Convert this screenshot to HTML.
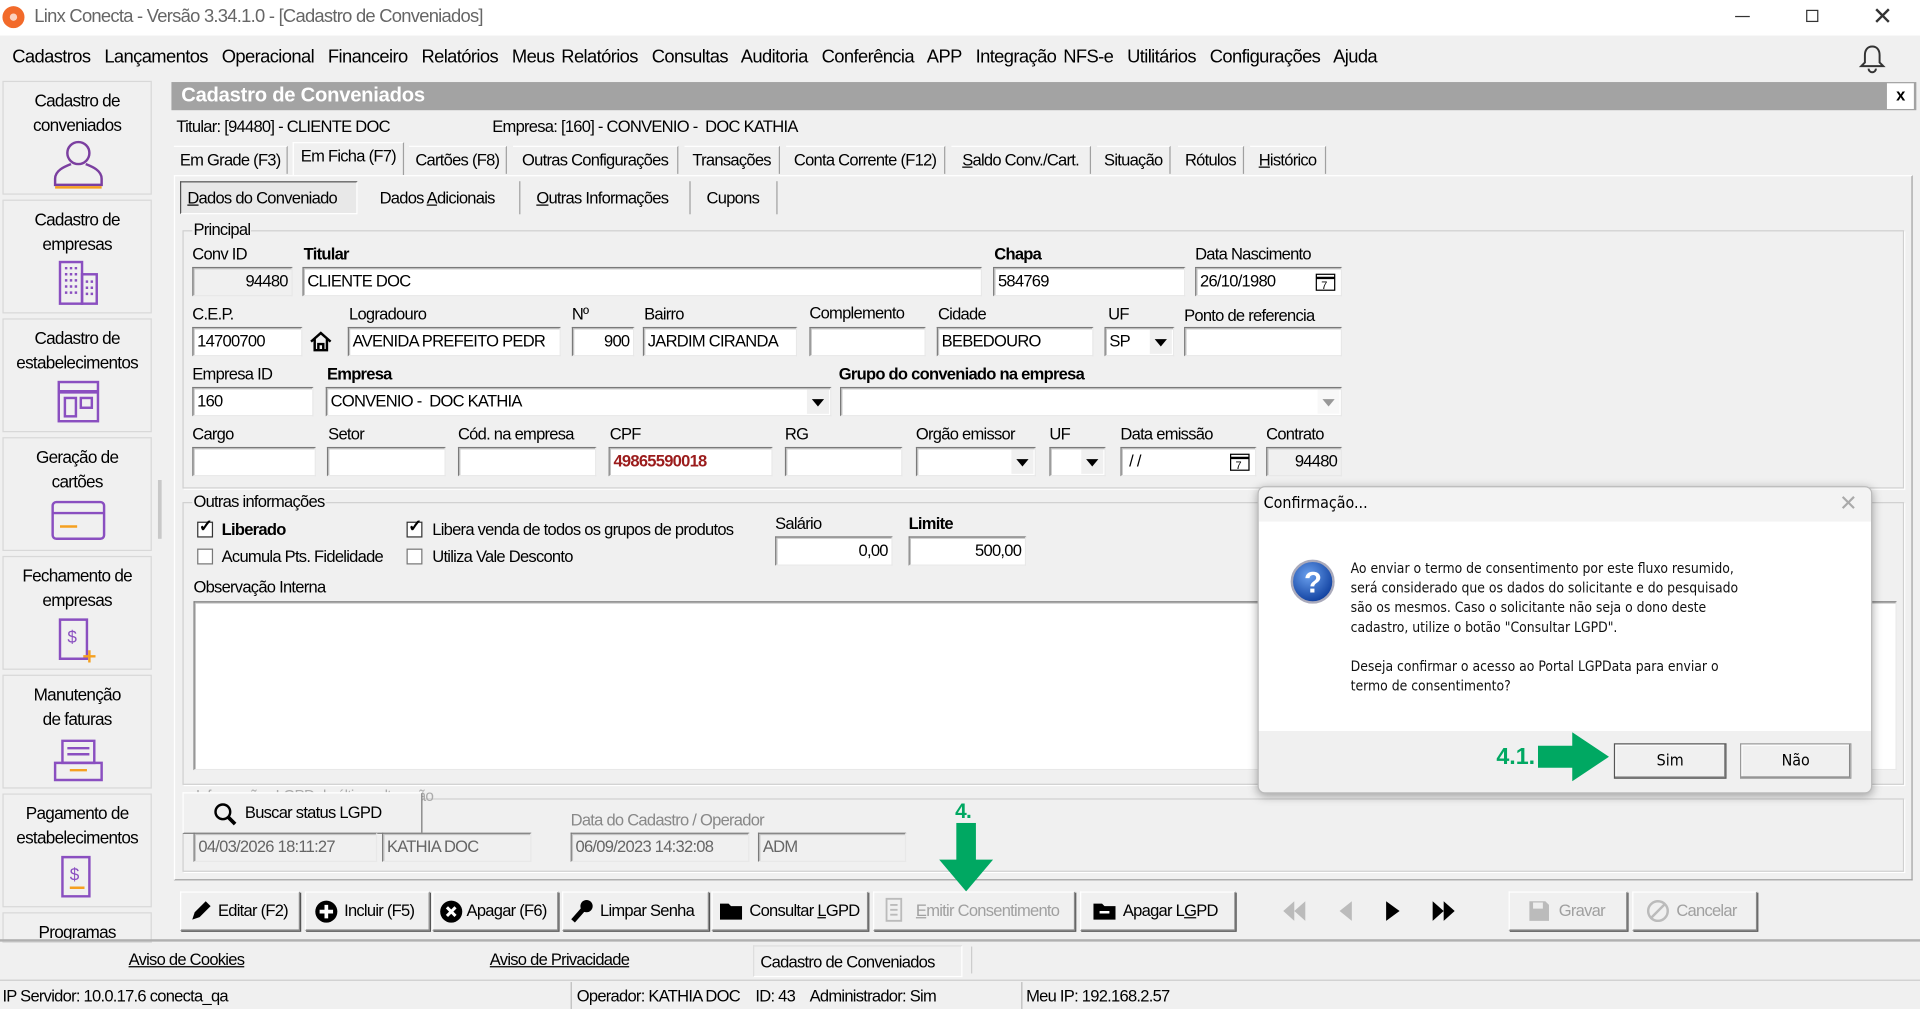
<!DOCTYPE html>
<html><head><meta charset="utf-8">
<style>
*{box-sizing:border-box;margin:0;padding:0}
html,body{width:1920px;height:1009px;overflow:hidden;background:#f0f0f0}
#st{position:absolute;left:0;top:0;width:1568px;height:824px;transform:scale(1.22449);transform-origin:0 0;background:#f0f0f0;font-family:"Liberation Sans",sans-serif;font-size:13.5px;letter-spacing:-0.6px;color:#000}
.a{position:absolute;white-space:nowrap}
.in{position:absolute;background:#fff;border:1px solid;border-color:#7a7a7a #e8e8e8 #e8e8e8 #7a7a7a;box-shadow:inset 1px 1px 0 #c4c4c4;height:24px;line-height:22px;padding-left:3px;white-space:nowrap;overflow:hidden}
.g{background:#f0f0f0}
.r{text-align:right;padding-right:3px}
.b{font-weight:bold}
.grp{position:absolute;border:1px solid #d0d0d0;box-shadow:1px 1px 0 #fff}
.lg{position:absolute;background:#f0f0f0;padding:0 1px;top:-9px;left:6px;line-height:16px}
.tab{position:absolute;top:119px;height:23px;line-height:22px;text-align:center;border-right:1px solid #a0a0a0;border-top:1px solid #fff;white-space:nowrap;overflow:hidden}
.sb{position:absolute;left:2px;width:122px;height:93px;border:1px solid #d8d8d8;background:#f0f0f0;text-align:center;line-height:20px;padding-top:5px;font-size:14px}
.btn{position:absolute;top:728px;height:32px;border:1px solid;border-color:#fff #8a8a8a #8a8a8a #fff;box-shadow:1px 1px 0 #555;line-height:30px;padding-left:8px;background:#f0f0f0;white-space:nowrap;overflow:hidden}
.dd{position:absolute;right:1px;top:1px;width:18px;height:20px;background:#f0f0f0}
.dd:after{content:"";position:absolute;left:4px;top:8px;border-left:5px solid transparent;border-right:5px solid transparent;border-top:6px solid #000}
.cb{position:absolute;width:13px;height:13px;border:1px solid #333;background:#fff}
u{text-decoration:underline}
.dlg{font-family:'DejaVu Sans Condensed','DejaVu Sans',sans-serif;letter-spacing:0}
</style></head><body>
<div id="st">
<div class="a" style="left:0;top:0;width:1568px;height:29px;background:#fff"></div>
<div class="a" style="left:2px;top:5px;width:18px;height:18px;border-radius:50%;background:#f26a2a"></div>
<div class="a" style="left:8px;top:11px;width:6px;height:6px;border-radius:50%;background:#fff;opacity:.7"></div>
<div class="a" style="left:28px;top:5px;color:#666;font-size:15px">Linx Conecta - Versão 3.34.1.0 - [Cadastro de Conveniados]</div>
<div class="a" style="left:1417px;top:13px;width:12px;border-top:1px solid #333"></div>
<div class="a" style="left:1475px;top:8px;width:10px;height:10px;border:1px solid #333"></div>
<div class="a" style="left:1529px;top:1px;font-size:20px;color:#333">✕</div>
<div class="a" style="left:10px;top:38px;font-size:15px;word-spacing:2px;letter-spacing:-0.5px">Cadastros&nbsp; Lançamentos&nbsp; Operacional&nbsp; Financeiro&nbsp; Relatórios&nbsp; Meus Relatórios&nbsp; Consultas&nbsp; Auditoria&nbsp; Conferência&nbsp; APP&nbsp; Integração NFS-e&nbsp; Utilitários&nbsp; Configurações&nbsp; Ajuda</div>
<svg class="a" style="left:1518px;top:36px" width="22" height="24" viewBox="0 0 22 24"><path d="M11 2c-4 0-6 3-6 7v6l-3 3h18l-3-3V9c0-4-2-7-6-7zM8 20a3 3 0 0 0 6 0" fill="none" stroke="#333" stroke-width="1.6"/></svg>
<div class="sb" style="top:66px">Cadastro de<br>conveniados
<svg style="position:absolute;left:38px;top:44px" width="46" height="44"><circle cx="23" cy="14" r="9" fill="none" stroke="#7b3fa0" stroke-width="2"/><path d="M17 23c-5 2-13 5-13 12v5h38v-5c0-7-8-10-13-12" fill="none" stroke="#7b3fa0" stroke-width="2"/><path d="M4 42h38" stroke="#f5a020" stroke-width="2"/></svg></div>
<div class="sb" style="top:163px">Cadastro de<br>empresas
<svg style="position:absolute;left:42px;top:46px" width="38" height="40"><rect x="4" y="4" width="18" height="34" fill="none" stroke="#8a4fc0" stroke-width="2"/><rect x="22" y="14" width="12" height="24" fill="none" stroke="#8a4fc0" stroke-width="2"/><path d="M8 9h10M8 14h10M8 19h10M8 24h10M8 29h10M25 20h6M25 25h6M25 30h6" stroke="#8a4fc0" stroke-width="2" stroke-dasharray="2 2"/></svg></div>
<div class="sb" style="top:260px">Cadastro de<br>estabelecimentos
<svg style="position:absolute;left:42px;top:48px" width="38" height="38"><rect x="3" y="3" width="32" height="32" fill="none" stroke="#8a4fc0" stroke-width="2"/><path d="M3 11h32" stroke="#8a4fc0" stroke-width="3"/><rect x="8" y="16" width="9" height="15" fill="none" stroke="#8a4fc0" stroke-width="2"/><rect x="21" y="16" width="9" height="8" fill="none" stroke="#8a4fc0" stroke-width="2"/></svg></div>
<div class="sb" style="top:357px">Geração de<br>cartões
<svg style="position:absolute;left:38px;top:50px" width="46" height="34"><rect x="2" y="2" width="42" height="30" rx="3" fill="none" stroke="#8a4fc0" stroke-width="2"/><path d="M2 11h42" stroke="#8a4fc0" stroke-width="2"/><path d="M8 22h14" stroke="#f5a020" stroke-width="2"/></svg></div>
<div class="sb" style="top:454px">Fechamento de<br>empresas
<svg style="position:absolute;left:42px;top:48px" width="36" height="40"><path d="M4 3h22v32H4z" fill="none" stroke="#8a4fc0" stroke-width="2"/><text x="10" y="22" font-size="14" fill="#8a4fc0" font-family="Liberation Sans">$</text><path d="M28 28v10M23 33h10" stroke="#f5a020" stroke-width="2"/></svg></div>
<div class="sb" style="top:551px">Manutenção<br>de faturas
<svg style="position:absolute;left:40px;top:50px" width="42" height="38"><path d="M8 3h26v18H8z" fill="none" stroke="#8a4fc0" stroke-width="2"/><path d="M12 9h18M12 14h18" stroke="#8a4fc0" stroke-width="2"/><path d="M2 21h38v14H2z" fill="none" stroke="#8a4fc0" stroke-width="2"/><path d="M14 27h14" stroke="#f5a020" stroke-width="2"/></svg></div>
<div class="sb" style="top:648px">Pagamento de<br>estabelecimentos
<svg style="position:absolute;left:44px;top:48px" width="34" height="40"><path d="M4 3h22v32H4z" fill="none" stroke="#8a4fc0" stroke-width="2"/><text x="10" y="22" font-size="14" fill="#8a4fc0" font-family="Liberation Sans">$</text><path d="M10 28h12" stroke="#f5a020" stroke-width="2"/></svg></div>
<div class="sb" style="top:745px;height:25px">Programas</div>
<div class="a" style="left:129px;top:392px;width:3px;height:48px;background:#c8c8c8"></div>
<div class="a" style="left:140px;top:67px;width:1425px;height:23px;background:#a3a3a3"></div>
<div class="a b" style="left:148px;top:69px;color:#fff;font-size:16.5px;letter-spacing:-0.2px">Cadastro de Conveniados</div>
<div class="a b" style="left:1541px;top:68px;width:22px;height:21px;background:#fff;text-align:center;line-height:20px">x</div>
<div class="a" style="left:144px;top:96px">Titular: [94480] - CLIENTE DOC</div>
<div class="a" style="left:402px;top:96px">Empresa: [160] - CONVENIO -&nbsp; DOC KATHIA</div>
<div class="tab" style="left:142px;width:93px">Em Grade (F3)</div>
<div class="tab" style="left:239px;width:91px;top:116px;height:27px;background:#f0f0f0;border-left:1px solid #fff">Em Ficha (F7)</div>
<div class="tab" style="left:334px;width:80px">Cartões (F8)</div>
<div class="tab" style="left:419px;width:135px">Outras Configurações</div>
<div class="tab" style="left:559px;width:78px">Transações</div>
<div class="tab" style="left:642px;width:130px">Conta Corrente (F12)</div>
<div class="tab" style="left:777px;width:114px"><u>S</u>aldo Conv./Cart.</div>
<div class="tab" style="left:896px;width:60px">Situação</div>
<div class="tab" style="left:962px;width:54px">Rótulos</div>
<div class="tab" style="left:1021px;width:62px"><u>H</u>istórico</div>
<div class="a" style="left:142px;top:143px;width:1420px;height:576px;border:1px solid;border-color:#fff #a0a0a0 #a0a0a0 #fff"></div>
<div class="a" style="left:147px;top:148px;width:145px;height:27px;border:1px solid;border-color:#555 #fff #fff #555;background:#e8e8e8"></div>
<div class="a" style="left:153px;top:154px"><u>D</u>ados do Conveniado</div>
<div class="a" style="left:310px;top:154px">Dados <u>A</u>dicionais</div>
<div class="a" style="left:424px;top:148px;height:27px;border-right:1px solid #a0a0a0"></div>
<div class="a" style="left:438px;top:154px"><u>O</u>utras Informações</div>
<div class="a" style="left:563px;top:148px;height:27px;border-right:1px solid #a0a0a0"></div>
<div class="a" style="left:577px;top:154px">Cupons</div>
<div class="a" style="left:634px;top:148px;height:27px;border-right:1px solid #a0a0a0"></div>
<div class="grp" style="left:149px;top:188px;width:1406px;height:211px"><span class="lg" style="left:7px">Principal</span></div>
<div class="a" style="left:157px;top:200px">Conv ID</div>
<div class="a b" style="left:248px;top:200px">Titular</div>
<div class="a b" style="left:812px;top:200px">Chapa</div>
<div class="a" style="left:976px;top:200px">Data Nascimento</div>
<div class="in g r" style="left:157px;top:218px;width:82px">94480</div>
<div class="in" style="left:247px;top:218px;width:555px">CLIENTE DOC</div>
<div class="in" style="left:811px;top:218px;width:157px">584769</div>
<div class="in" style="left:976px;top:218px;width:120px">26/10/1980</div>
<svg class="a" style="left:1074px;top:222px" width="17" height="16"><rect x="1" y="2" width="15" height="13" fill="#fff" stroke="#000"/><path d="M1 5h15" stroke="#000" stroke-width="2"/><text x="5" y="14" font-size="9" font-family="Liberation Sans">7</text></svg>
<div class="a" style="left:157px;top:249px">C.E.P.</div>
<div class="a" style="left:285px;top:249px">Logradouro</div>
<div class="a" style="left:467px;top:249px">Nº</div>
<div class="a" style="left:526px;top:249px">Bairro</div>
<div class="a" style="left:661px;top:248px">Complemento</div>
<div class="a" style="left:766px;top:249px">Cidade</div>
<div class="a" style="left:905px;top:249px">UF</div>
<div class="a" style="left:967px;top:250px">Ponto de referencia</div>
<div class="in" style="left:157px;top:267px;width:90px">14700700</div>
<svg class="a" style="left:252px;top:270px" width="20" height="18"><path d="M2 9L10 2l8 7M5 7v9h10V7M8 16v-5h4v5" fill="none" stroke="#000" stroke-width="2"/></svg>
<div class="in" style="left:284px;top:267px;width:174px">AVENIDA PREFEITO PEDR</div>
<div class="in r" style="left:467px;top:267px;width:51px">900</div>
<div class="in" style="left:525px;top:267px;width:126px">JARDIM CIRANDA</div>
<div class="in" style="left:661px;top:267px;width:95px"></div>
<div class="in" style="left:765px;top:267px;width:128px">BEBEDOURO</div>
<div class="in" style="left:902px;top:267px;width:57px">SP<span class="dd"></span></div>
<div class="in" style="left:967px;top:267px;width:129px"></div>
<div class="a" style="left:157px;top:298px">Empresa ID</div>
<div class="a b" style="left:267px;top:298px">Empresa</div>
<div class="a b" style="left:685px;top:298px">Grupo do conveniado na empresa</div>
<div class="in" style="left:157px;top:316px;width:99px">160</div>
<div class="in" style="left:266px;top:316px;width:413px">CONVENIO -&nbsp; DOC KATHIA<span class="dd"></span></div>
<div class="in" style="left:686px;top:316px;width:410px"><span class="dd" style="opacity:.4"></span></div>
<div class="a" style="left:157px;top:347px">Cargo</div>
<div class="a" style="left:268px;top:347px">Setor</div>
<div class="a" style="left:374px;top:347px">Cód. na empresa</div>
<div class="a" style="left:498px;top:347px">CPF</div>
<div class="a" style="left:641px;top:347px">RG</div>
<div class="a" style="left:748px;top:347px">Orgão emissor</div>
<div class="a" style="left:857px;top:347px">UF</div>
<div class="a" style="left:915px;top:347px">Data emissão</div>
<div class="a" style="left:1034px;top:347px">Contrato</div>
<div class="in" style="left:157px;top:365px;width:101px"></div>
<div class="in" style="left:267px;top:365px;width:97px"></div>
<div class="in" style="left:374px;top:365px;width:113px"></div>
<div class="in b" style="left:497px;top:365px;width:134px;color:#9b1c1c">49865590018</div>
<div class="in" style="left:641px;top:365px;width:96px"></div>
<div class="in" style="left:748px;top:365px;width:98px"><span class="dd"></span></div>
<div class="in" style="left:857px;top:365px;width:46px"><span class="dd"></span></div>
<div class="in" style="left:915px;top:365px;width:111px">&nbsp;/ /</div>
<svg class="a" style="left:1004px;top:369px" width="17" height="16"><rect x="1" y="2" width="15" height="13" fill="#fff" stroke="#000"/><path d="M1 5h15" stroke="#000" stroke-width="2"/><text x="5" y="14" font-size="9" font-family="Liberation Sans">7</text></svg>
<div class="in g r" style="left:1034px;top:365px;width:62px">94480</div>
<div class="grp" style="left:149px;top:410px;width:1406px;height:231px"><span class="lg" style="left:7px">Outras informações</span></div>
<div class="cb" style="left:161px;top:426px"></div><div class="a b" style="left:159px;top:421px;font-size:14px">&nbsp;✓</div>
<div class="a b" style="left:181px;top:425px">Liberado</div>
<div class="cb" style="left:332px;top:426px"></div><div class="a b" style="left:330px;top:421px;font-size:14px">&nbsp;✓</div>
<div class="a" style="left:353px;top:425px">Libera venda de todos os grupos de produtos</div>
<div class="cb" style="left:161px;top:448px;border-color:#777"></div>
<div class="a" style="left:181px;top:447px">Acumula Pts. Fidelidade</div>
<div class="cb" style="left:332px;top:448px;border-color:#777"></div>
<div class="a" style="left:353px;top:447px">Utiliza Vale Desconto</div>
<div class="a" style="left:633px;top:420px">Salário</div>
<div class="a b" style="left:742px;top:420px">Limite</div>
<div class="in r" style="left:633px;top:438px;width:96px">0,00</div>
<div class="in r" style="left:742px;top:438px;width:96px">500,00</div>
<div class="a" style="left:158px;top:472px">Observação Interna</div>
<div class="in" style="left:158px;top:491px;width:1391px;height:138px"></div>
<div class="grp" style="left:149px;top:652px;width:1406px;height:60px"></div>
<div class="a" style="left:160px;top:643px;color:#aaa;font-size:12.5px">Informações LGPD da última alteração</div>
<div class="a" style="left:149px;top:647px;width:196px;height:34px;background:#f0f0f0;border:1px solid;border-color:#fff #777 #777 #fff;line-height:32px;padding-left:50px">Buscar status LGPD</div>
<svg class="a" style="left:174px;top:655px" width="20" height="20"><circle cx="8" cy="8" r="6" fill="none" stroke="#000" stroke-width="2"/><path d="M12 12l6 6" stroke="#000" stroke-width="3"/></svg>
<div class="a" style="left:466px;top:662px;color:#888">Data do Cadastro / Operador</div>
<div class="in g" style="left:158px;top:680px;width:150px;color:#666">04/03/2026 18:11:27</div>
<div class="in g" style="left:312px;top:680px;width:122px;color:#666">KATHIA DOC</div>
<div class="in g" style="left:466px;top:680px;width:146px;color:#666">06/09/2023 14:32:08</div>
<div class="in g" style="left:619px;top:680px;width:121px;color:#666">ADM</div>
<div class="a b" style="left:780px;top:653px;color:#00a862;font-size:17px">4.</div>
<svg class="a" style="left:765px;top:672px" width="48" height="58"><path d="M16 0h16v30h14L24 56 2 30h14z" fill="#00a862"/></svg>
<div class="btn" style="left:147px;width:98px;padding-left:30px">Editar (F2)</div>
<svg class="a" style="left:155px;top:735px" width="18" height="18"><path d="M2 16l2-6 9-9 4 4-9 9z" fill="#000"/></svg>
<div class="btn" style="left:249px;width:102px;padding-left:31px">Incluir (F5)</div>
<svg class="a" style="left:257px;top:735px" width="19" height="19"><circle cx="9.5" cy="9.5" r="9" fill="#000"/><path d="M9.5 4v11M4 9.5h11" stroke="#fff" stroke-width="3"/></svg>
<div class="btn" style="left:353px;width:103px;padding-left:27px">Apagar (F6)</div>
<svg class="a" style="left:359px;top:735px" width="19" height="19"><circle cx="9.5" cy="9.5" r="9" fill="#000"/><path d="M6 6l7 7M13 6l-7 7" stroke="#fff" stroke-width="2.5"/></svg>
<div class="btn" style="left:459px;width:120px;padding-left:30px">Limpar Senha</div>
<svg class="a" style="left:466px;top:734px" width="20" height="20"><circle cx="13" cy="6" r="5" fill="#000"/><path d="M10 9L2 18" stroke="#000" stroke-width="4"/></svg>
<div class="btn" style="left:581px;width:128px;padding-left:30px">Consultar <u>L</u>GPD</div>
<svg class="a" style="left:587px;top:736px" width="20" height="16"><path d="M1 2h7l2 2h9v11H1z" fill="#000"/></svg>
<div class="btn" style="left:713px;width:165px;padding-left:34px;color:#a0a0a0"><u>E</u>mitir Consentimento</div>
<svg class="a" style="left:722px;top:733px" width="18" height="22"><path d="M2 1h12v18H2zM5 6h6M5 10h6M5 14h6" fill="none" stroke="#bbb" stroke-width="1.5"/></svg>
<div class="btn" style="left:882px;width:127px;padding-left:34px">Apagar L<u>G</u>PD</div>
<svg class="a" style="left:892px;top:736px" width="20" height="16"><path d="M1 2h7l2 2h9v11H1z" fill="#000"/><path d="M6 9h8" stroke="#fff" stroke-width="2"/></svg>
<svg class="a" style="left:1044px;top:734px" width="150" height="20"><path d="M22 2v16l-9-8zM13 2v16l-9-8z" fill="#bbb"/><path d="M60 2v16l-10-8z" fill="#bbb"/><path d="M88 2v16l11-8z" fill="#000"/><path d="M126 2v16l9-8zM135 2v16l9-8z" fill="#000"/></svg>
<div class="btn" style="left:1232px;width:97px;padding-left:40px;color:#a0a0a0">Gravar</div>
<svg class="a" style="left:1248px;top:735px" width="18" height="18"><path d="M1 1h13l3 3v13H1z" fill="#bbb"/><path d="M4 2h8v5H4z" fill="#eee"/></svg>
<div class="btn" style="left:1333px;width:102px;padding-left:35px;color:#a0a0a0">Cancelar</div>
<svg class="a" style="left:1344px;top:734px" width="20" height="20"><circle cx="10" cy="10" r="8" fill="none" stroke="#bbb" stroke-width="2"/><path d="M4 16L16 4" stroke="#bbb" stroke-width="2"/></svg>
<div class="a" style="left:0;top:767px;width:1568px;border-top:2px solid #b0b0b0"></div>
<div class="a" style="left:105px;top:776px"><u>Aviso de Cookies</u></div>
<div class="a" style="left:400px;top:776px"><u>Aviso de Privacidade</u></div>
<div class="a" style="left:615px;top:772px;width:171px;height:26px;border:1px solid;border-color:#ddd #fff #fff #ddd;line-height:26px;padding-left:5px">Cadastro de Conveniados</div>
<div class="a" style="left:793px;top:773px;height:22px;border-left:1px solid #ccc"></div>
<div class="a" style="left:0;top:800px;width:1568px;height:24px;border-top:1px solid #ccc"></div>
<div class="a" style="left:2px;top:806px">IP Servidor: 10.0.17.6 conecta_qa</div>
<div class="a" style="left:466px;top:802px;height:22px;border-left:1px solid #bbb"></div>
<div class="a" style="left:471px;top:806px">Operador: KATHIA DOC&nbsp;&nbsp;&nbsp; ID: 43&nbsp;&nbsp;&nbsp; Administrador: Sim</div>
<div class="a" style="left:834px;top:802px;height:22px;border-left:1px solid #bbb"></div>
<div class="a" style="left:838px;top:806px">Meu IP: 192.168.2.57</div>
<div class="a" style="left:1027px;top:397px;width:502px;height:251px;background:#f0f0f0;border:1px solid #bbb;border-radius:6px;box-shadow:0 2px 8px rgba(0,0,0,.35);overflow:hidden">
 <div class="a" style="left:0;top:0;width:500px;height:28px;background:#f3f3f3"></div>
 <div class="a dlg" style="left:4px;top:6px;font-size:13px">Confirmação...</div>
 <div class="a" style="left:474px;top:3px;color:#aaa;font-size:18px">✕</div>
 <div class="a" style="left:0;top:28px;width:500px;height:171px;background:#fff"></div>
 <svg class="a" style="left:25px;top:58px" width="38" height="38"><defs><radialGradient id="q" cx=".4" cy=".35" r=".7"><stop offset="0" stop-color="#6aa0ee"/><stop offset="1" stop-color="#0a3a9a"/></radialGradient></defs><circle cx="19" cy="19" r="17" fill="url(#q)" stroke="#aab" stroke-width="2"/><text x="19" y="28" text-anchor="middle" fill="#fff" font-size="24" font-weight="bold" font-family="Liberation Sans">?</text></svg>
 <div class="a dlg" style="left:75px;top:59px;font-size:11.3px;line-height:16px;color:#111;white-space:normal;width:322px">Ao enviar o termo de consentimento por este fluxo resumido, será considerado que os dados do solicitante e do pesquisado são os mesmos. Caso o solicitante não seja o dono deste cadastro, utilize o botão "Consultar LGPD".<br><br>Deseja confirmar o acesso ao Portal LGPData para enviar o termo de consentimento?</div>
 <div class="a dlg" style="left:290px;top:209px;width:92px;height:29px;border:1px solid #555;box-shadow:inset -1px -1px 0 #888,inset 1px 1px 0 #fff;text-align:center;line-height:27px;font-size:13px">Sim</div>
 <div class="a dlg" style="left:393px;top:209px;width:91px;height:29px;border:1px solid #999;box-shadow:inset -1px -1px 0 #888,inset 1px 1px 0 #fff;text-align:center;line-height:27px;font-size:13px">Não</div>
 <div class="a b" style="left:194px;top:210px;color:#00a862;font-size:19px;letter-spacing:0">4.1.</div>
 <svg class="a" style="left:228px;top:200px" width="62" height="40"><path d="M0 11h28V0l30 20-30 20V29H0z" fill="#00a862"/></svg>
</div>
</div>
</body></html>
